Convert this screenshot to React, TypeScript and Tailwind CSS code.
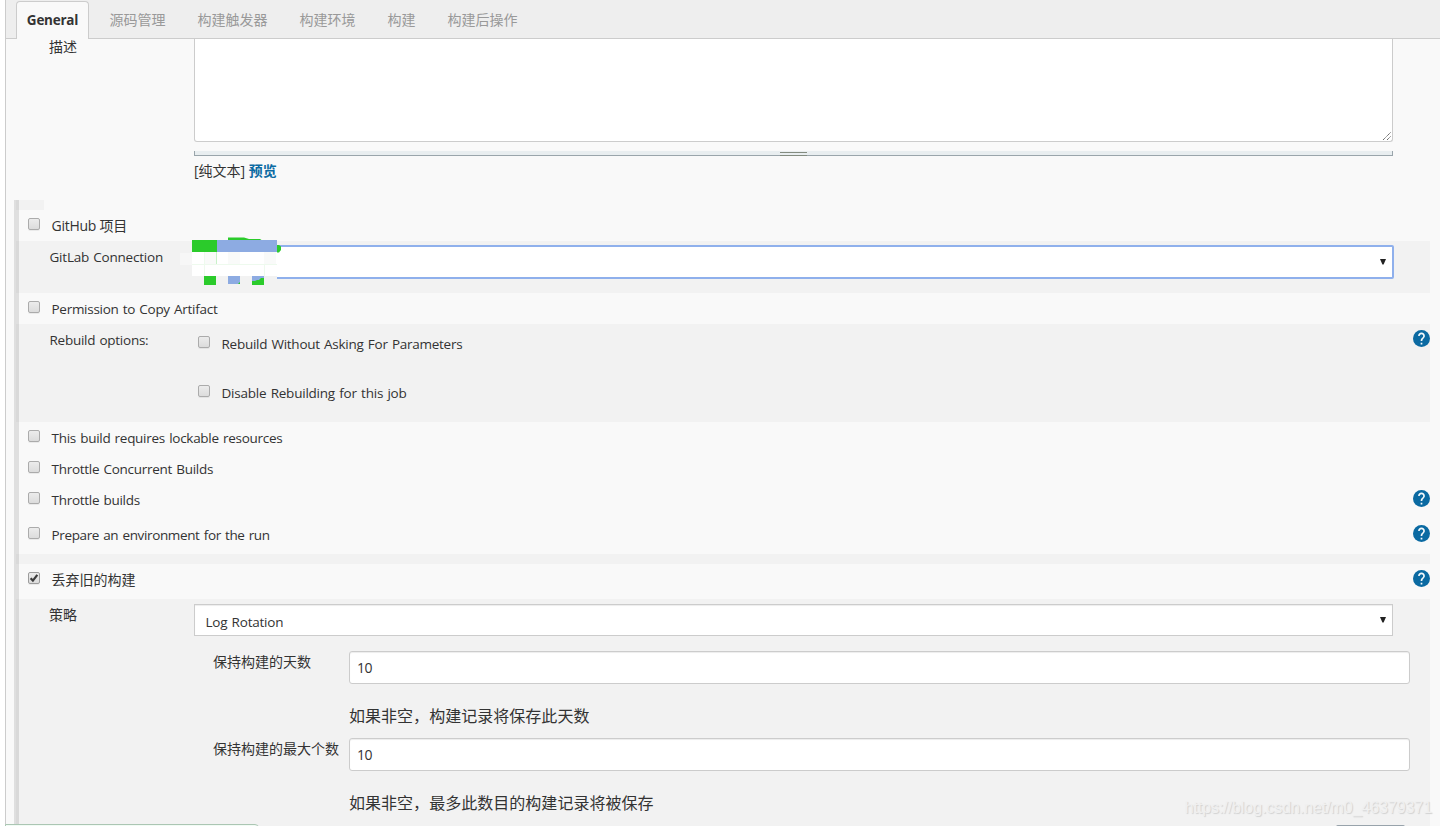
import type { ReactNode } from 'react'

const TABS = ['源码管理', '构建触发器', '构建环境', '构建', '构建后操作']

function Checkbox({ checked = false }: { checked?: boolean }) {
  return (
    <span className={`flex items-center justify-center shrink-0 w-3 h-3 rounded-[2px] border bg-gradient-to-b from-[#ececec] to-[#dcdcdc] shadow-[0_1px_0_rgba(0,0,0,0.06)] ${checked ? 'border-[#9c9c9c]' : 'border-[#ababab]'}`}>
      {checked && (
        <svg width="10" height="10" viewBox="0 0 10 10" fill="none">
          <path d="M1.6 5.2 L3.9 7.6 L8.3 1.8" stroke="#3c3c3c" strokeWidth="2.2" />
        </svg>
      )}
    </span>
  )
}

function HelpIcon() {
  return (
    <svg className="block shrink-0 w-[17px] h-[17px] mr-[0.5px]" viewBox="2 2 20 20">
      <circle cx="12" cy="12" r="10" fill="#0b6aa2" />
      <path fill="#f4f9fc" d="M13 19h-2v-2h2v2zm2.07-7.75l-.9.92C13.45 12.9 13 13.5 13 15h-2v-.5c0-1.1.45-2.1 1.17-2.83l1.24-1.26c.37-.36.59-.86.59-1.41 0-1.1-.9-2-2-2s-2 .9-2 2H8c0-2.21 1.79-4 4-4s4 1.79 4 4c0 .88-.36 1.68-.93 2.25z" />
    </svg>
  )
}

function CheckRow({ label, track, help, tall, checked }: { label: string; track?: string; help?: boolean; tall?: boolean; checked?: boolean }) {
  return (
    <div className={`flex items-start w-[1414px] pl-3 pt-2 ${tall ? 'h-[35px]' : 'h-[31px]'}`}>
      <Checkbox checked={checked} />
      <span className={`ml-[11.5px] -mt-0.5 leading-5 ${track ?? 'text-[13.5px] tracking-[-0.28px] [word-spacing:1px]'}`}>{label}</span>
      {help && <span className="ml-auto -mt-0.5"><HelpIcon /></span>}
    </div>
  )
}

function OptionRow({ label, track }: { label: string; track: string }) {
  return (
    <div className="flex items-start h-[49px] pt-3">
      <Checkbox />
      <span className={`ml-[11.5px] -mt-1.5 leading-7 text-[13.5px] [word-spacing:1px] ${track}`}>{label}</span>
    </div>
  )
}

function Arrow() {
  return (
    <svg width="6" height="6" viewBox="0 0 6 6" className="block">
      <path d="M0 0h6L3.6 5.6H2.4z" fill="#222" />
    </svg>
  )
}

function NumberField({ label, hint }: { label: string; hint: ReactNode }) {
  return (
    <div className="flex h-[87px] pl-[197px]">
      <span className="w-[136px] shrink-0 leading-5 pt-[1px]">{label}</span>
      <div>
        <div className="flex items-center w-[1061px] h-[33px] px-[7px] rounded-[3px] border border-[#ccc] bg-white shadow-[inset_0_1px_1px_rgba(0,0,0,0.075)] tracking-[-0.4px]">10</div>
        <p className="mt-5 text-base leading-6 tracking-[0.03px]">{hint}</p>
      </div>
    </div>
  )
}

// painted blocks hiding the selected connection name
function Redaction() {
  return (
    <svg className="absolute left-[164px] -top-[6px]" width="104" height="54" viewBox="0 0 104 54">
      <rect x="11" y="10" width="86" height="34" fill="#f2f2f2" />
      <rect x="0" y="18" width="14" height="12" fill="#f7f7f7" />
      <path d="M48 6V2.500H64L69 4H80L83 6z" fill="#2bcb2b" />
      <path d="M96 10h3l2 1.500v3.500l-2 2.500h-3z" fill="#2bcb2b" />
      <rect x="12" y="5" width="25" height="12" fill="#2bcb2b" />
      <rect x="37" y="5" width="60" height="12" fill="#8dabe2" />
      <rect x="12" y="17" width="85" height="24" fill="#fff" />
      <path d="M48 17h12v12H48zM84 17h12v12H84zM24 17h12v12H24z" fill="#f9faf9" />
      <path d="M12 29.500H97M24.500 17V41M84.500 29V41" stroke="#eefaee" />
      <path d="M36.500 17V29" stroke="#c9f2c9" />
      <rect x="24" y="41" width="12" height="9" fill="#2bcb2b" />
      <rect x="48" y="41" width="12" height="8" fill="#8dabe2" />
      <path d="M58 49l2-2v2z" fill="#2bcb2b" />
      <rect x="72" y="41" width="12" height="9" fill="#8dabe2" />
      <path d="M72 50v-4h3l2-1h2l2-2h3v7z" fill="#2bcb2b" />
    </svg>
  )
}

export default function App() {
  return (
    <div className="relative w-[1440px] h-[826px] overflow-hidden bg-white pl-[5px] text-sm text-[#333] font-['Open_Sans','Noto_Sans_CJK_SC',sans-serif]">
      <div className="h-full border-l border-[#ccc] bg-[#f9f9f9]">
        <header className="flex items-end h-[39px] pl-2.5 bg-[#eee] border-b border-[#ccc]">
          <div className="h-[38px] -mb-px w-[73px] flex items-center justify-center rounded-t border border-b-0 border-[#ccc] bg-[#f9f9f9] font-bold text-[13.5px] tracking-[-0.25px]">General</div>
          <nav className="flex gap-8 ml-[20.5px] h-[38px] pt-0.5 items-center text-[#999]">
            {TABS.map(t => <span key={t}>{t}</span>)}
          </nav>
        </header>

        <section className="flex h-[161px] pl-[43px]">
          <span className="w-[145px] -mt-0.5 leading-5">描述</span>
          <div className="w-[1199px]">
            <div className="flex items-end justify-end h-[103px] rounded-b-[3px] border border-t-0 border-[#ccc] bg-white">
              <svg width="10" height="10" viewBox="0 0 10 10" className="block">
                <path d="M1 9L9 1M5 9L9 5" stroke="#555" strokeDasharray="1.2 0.6" />
              </svg>
            </div>
            <div className="mt-[9px] h-[5px] border border-t-0 border-[#9aa5ab] bg-[#e9eef0]">
              <div className="mx-auto w-[27px] h-1 border-y border-[#848c80] relative top-px" />
            </div>
            <div className="mt-[5px] leading-5">[纯文本] <a className="font-bold text-[#0b6aa2]">预览</a></div>
          </div>
        </section>

        <main className="relative pl-2.5">
          <div className="absolute left-2 top-0 w-[5px] h-[626px] bg-black/10 z-10" />
          <div className="w-7 h-2.5 bg-[#f2f2f2]" />
          <CheckRow label="GitHub 项目" track="tracking-[-0.25px]" />

          <div className="relative flex w-[1414px] h-[52px] pl-[33.5px] pt-1 bg-[#f2f2f2]">
            <span className="w-[143.5px] pt-0.5 leading-5 text-[13.5px] tracking-[-0.22px] [word-spacing:1px]">GitLab Connection</span>
            <div className="flex items-center justify-end w-[1201px] h-[34px] pr-1.5 border-2 border-[#8fb0ec] rounded-[2px] bg-white">
              <Arrow />
            </div>
            <Redaction />
          </div>

          <CheckRow label="Permission to Copy Artifact" />

          <div className="flex w-[1414px] h-[98px] pl-[33.5px] bg-[#f2f2f2]">
            <span className="w-[148.5px] pt-1.5 leading-5 text-[13.5px] tracking-[-0.26px] [word-spacing:1px]">Rebuild options:</span>
            <div>
              <OptionRow label="Rebuild Without Asking For Parameters" track="tracking-[-0.26px]" />
              <OptionRow label="Disable Rebuilding for this job" track="tracking-[-0.22px]" />
            </div>
            <span className="ml-auto pt-1.5"><HelpIcon /></span>
          </div>

          <CheckRow label="This build requires lockable resources" />
          <CheckRow label="Throttle Concurrent Builds" />
          <CheckRow label="Throttle builds" help tall />
          <CheckRow label="Prepare an environment for the run" track="text-[13.5px] tracking-[-0.36px] [word-spacing:1px]" help tall />
          <div className="w-[1414px] h-2.5 bg-[#f2f2f2]" />
          <CheckRow label="丢弃旧的构建" track="tracking-normal" help tall checked />

          <div className="w-[1414px] h-[227px] pt-[5px] bg-[#f2f2f2]">
            <div className="flex pl-[33px] mb-[15px]">
              <span className="w-[145px] pt-px leading-5">策略</span>
              <div className="flex items-center justify-between w-[1199px] h-8 pl-[10.5px] pr-1.5 border border-[#ccc] bg-white shadow-[inset_0_1px_1px_rgba(0,0,0,0.075)]">
                <span className="h-4 mt-[3px] overflow-hidden leading-4 text-[13.5px] tracking-[-0.22px] [word-spacing:1px]">Log Rotation</span>
                <Arrow />
              </div>
            </div>
            <NumberField label="保持构建的天数" hint="如果非空，构建记录将保存此天数" />
            <NumberField label="保持构建的最大个数" hint="如果非空，最多此数目的构建记录将被保存" />
          </div>
        </main>
      </div>

      <span className="absolute right-[8px] top-[796px] whitespace-nowrap text-base leading-6 tracking-[-0.08px] text-[#f0f0f0] font-['Liberation_Sans',sans-serif] [text-shadow:1px_1px_1px_#d0d0d0]">https://blog.csdn.net/m0_46379371</span>
      <div className="absolute left-[5px] top-[824px] w-[254px] h-3 border border-[#abc6b3] rounded-tr bg-[#f2fbf5] z-20" />
      <div className="absolute left-[1336px] top-[825px] w-[69px] h-3 rounded-t-[2px] bg-[#98a3ab]" />
    </div>
  )
}
